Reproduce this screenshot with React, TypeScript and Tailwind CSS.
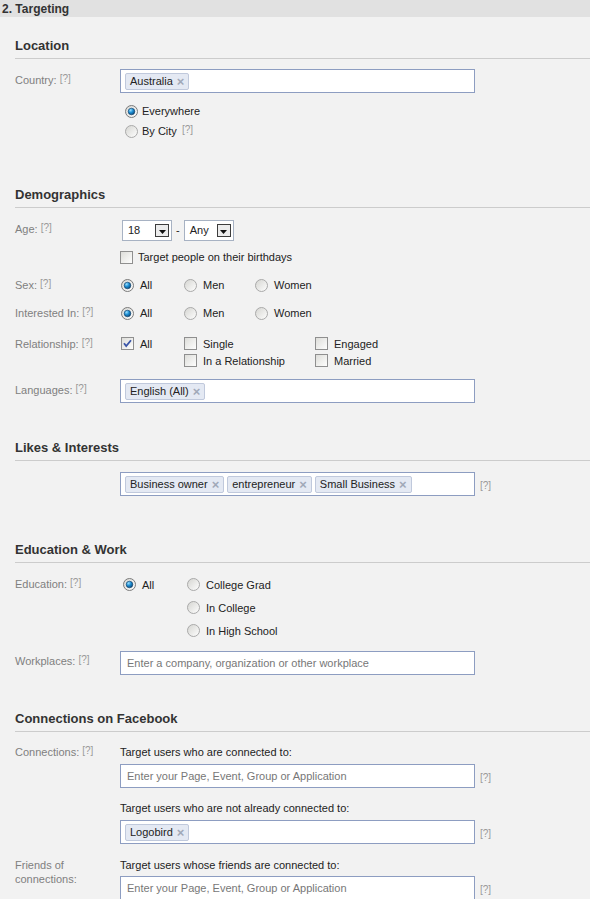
import React from "react";

function Help({ className = "" }: { className?: string }) {
  return <span className={"text-[10px] text-[#999] relative -top-[2px] " + className}>[?]</span>;
}

function Radio({ checked = false }: { checked?: boolean }) {
  return (
    <svg width="13" height="13" viewBox="0 0 13 13" className="shrink-0">
      <defs>
        <linearGradient id="rbg" x1="0" y1="0" x2="1" y2="1">
          <stop offset="0" stopColor="#d4d4d0" />
          <stop offset="1" stopColor="#ffffff" />
        </linearGradient>
        <radialGradient id="rdot" cx="0.35" cy="0.3" r="0.8">
          <stop offset="0" stopColor="#9be0ff" />
          <stop offset="0.45" stopColor="#1f8fd4" />
          <stop offset="1" stopColor="#0a3f6b" />
        </radialGradient>
      </defs>
      <circle cx="6.5" cy="6.5" r="6" fill="url(#rbg)" stroke={checked ? "#7a7a7a" : "#a9a9a9"} />
      {checked && <circle cx="6.5" cy="6.5" r="3.3" fill="url(#rdot)" stroke="#0d3d66" strokeWidth="0.6" />}
    </svg>
  );
}

function Check({ checked = false }: { checked?: boolean }) {
  return (
    <svg width="13" height="13" viewBox="0 0 13 13" className="shrink-0">
      <defs>
        <linearGradient id="cbg" x1="0" y1="0" x2="1" y2="1">
          <stop offset="0" stopColor="#dcdcd8" />
          <stop offset="1" stopColor="#ffffff" />
        </linearGradient>
      </defs>
      <rect x="0.5" y="0.5" width="12" height="12" fill="url(#cbg)" stroke="#8f8f8f" />
      {checked && <path d="M3 6.2 L5.2 9 L10 3.2" fill="none" stroke="#3a55a8" strokeWidth="1.8" />}
    </svg>
  );
}

function Token({ text }: { text: string }) {
  return (
    <span className="inline-flex items-center h-[17px] pl-[4px] pr-[4px] mr-[3px] bg-[#e4e9f3] border border-[#c0c9dc] rounded-[2px] text-[11px] text-[#222] leading-none">
      {text}
      <span className="ml-[4px] text-[#a0a8b8] text-[13px] font-bold leading-none">×</span>
    </span>
  );
}

function TokenInput({ tokens = [], placeholder }: { tokens?: string[]; placeholder?: string }) {
  return (
    <div className="w-[355px] h-[24px] bg-white border border-[#8d9dc1] flex items-center pl-[4px]">
      {tokens.map((t) => (
        <Token key={t} text={t} />
      ))}
      {placeholder && <span className="pl-[2px] text-[11px] text-[#777]">{placeholder}</span>}
    </div>
  );
}

function Label({ children, className = "" }: { children: React.ReactNode; className?: string }) {
  return <div className={"w-[105px] shrink-0 text-[11px] text-[#808080] leading-[14px] " + className}>{children}</div>;
}

function SectionHeader({ title, className = "" }: { title: string; className?: string }) {
  return (
    <div className={"h-[21px] pb-[4px] border-b border-[#cccccc] " + className}>
      <div className="text-[13px] font-bold text-[#333] leading-[16px]">{title}</div>
    </div>
  );
}

function Select({ value, w }: { value: string; w: string }) {
  return (
    <div className={"h-[21px] bg-white border border-[#a7b2c3] flex items-center justify-between pl-[5px] pr-[2px] " + w}>
      <span className="text-[11px] text-[#222]">{value}</span>
      <div className="w-[14px] h-[13px] border border-[#3c3c3c] bg-[#ececec] flex items-end justify-center pb-[2px]">
        <svg width="7" height="4" viewBox="0 0 7 4">
          <path d="M0 0 H7 L3.5 4 Z" fill="#111" />
        </svg>
      </div>
    </div>
  );
}

function Opt({ children, kind, checked = false, gap = "gap-[6px]", className = "" }: { children: React.ReactNode; kind: "r" | "c"; checked?: boolean; gap?: string; className?: string }) {
  return (
    <div className={"flex items-center " + gap + " " + className}>
      {kind === "r" ? <Radio checked={checked} /> : <Check checked={checked} />}
      <span className="text-[11px] text-[#222] leading-[14px]">{children}</span>
    </div>
  );
}

export default function App() {
  return (
    <div className="w-[590px] h-[899px] overflow-hidden bg-[#f2f2f2] font-['Liberation_Sans',Arial,sans-serif]">
      <div className="h-[17px] bg-[#e1e1e1] pl-[2px] flex items-center">
        <span className="text-[12px] font-bold text-[#333]">2. Targeting</span>
      </div>

      <div className="pl-[15px]">
        {/* Location */}
        <SectionHeader title="Location" className="mt-[21px]" />
        <div className="flex mt-[10px]">
          <Label className="pt-[4px]">
            Country: <Help />
          </Label>
          <TokenInput tokens={["Australia"]} />
        </div>
        <div className="pl-[110px] mt-[8px]">
          <Opt kind="r" checked gap="gap-[4px]" className="h-[20px]">Everywhere</Opt>
          <Opt kind="r" gap="gap-[4px]" className="h-[20px]">
            By City <Help className="ml-[2px]" />
          </Opt>
        </div>

        {/* Demographics */}
        <SectionHeader title="Demographics" className="mt-[46px]" />
        <div className="flex mt-[12px]">
          <Label className="pt-[2px]">
            Age: <Help />
          </Label>
          <div className="flex items-center ml-[2px]">
            <Select value="18" w="w-[50px]" />
            <span className="mx-[4px] text-[11px] text-[#222]">-</span>
            <Select value="Any" w="w-[50px]" />
          </div>
        </div>
        <div className="pl-[105px] mt-[6px]">
          <Opt kind="c" gap="gap-[5px]" className="h-[20px]">Target people on their birthdays</Opt>
        </div>

        <div className="flex items-center h-[20px] mt-[8px]">
          <Label>
            Sex: <Help />
          </Label>
          <div className="flex items-center pl-[1px]">
            <Opt kind="r" checked className="w-[63px]">All</Opt>
            <Opt kind="r" className="w-[71px]">Men</Opt>
            <Opt kind="r">Women</Opt>
          </div>
        </div>

        <div className="flex items-center h-[20px] mt-[8px]">
          <Label>
            Interested In: <Help />
          </Label>
          <div className="flex items-center pl-[1px]">
            <Opt kind="r" checked className="w-[63px]">All</Opt>
            <Opt kind="r" className="w-[71px]">Men</Opt>
            <Opt kind="r">Women</Opt>
          </div>
        </div>

        <div className="flex mt-[12px]">
          <Label className="pt-[2px]">
            Relationship: <Help />
          </Label>
          <div className="flex pl-[1px]">
            <div className="w-[63px]">
              <Opt kind="c" checked className="h-[17px]">All</Opt>
            </div>
            <div className="w-[131px]">
              <Opt kind="c" className="h-[17px]">Single</Opt>
              <Opt kind="c" className="h-[17px]">In a Relationship</Opt>
            </div>
            <div>
              <Opt kind="c" className="h-[17px]">Engaged</Opt>
              <Opt kind="c" className="h-[17px]">Married</Opt>
            </div>
          </div>
        </div>

        <div className="flex mt-[10px]">
          <Label className="pt-[4px]">
            Languages: <Help />
          </Label>
          <TokenInput tokens={["English (All)"]} />
        </div>

        {/* Likes */}
        <SectionHeader title="Likes & Interests" className="mt-[37px]" />
        <div className="flex items-center mt-[11px] pl-[105px]">
          <TokenInput tokens={["Business owner", "entrepreneur", "Small Business"]} />
          <Help className="ml-[5px] top-[1px]" />
        </div>

        {/* Education */}
        <SectionHeader title="Education & Work" className="mt-[46px]" />
        <div className="flex mt-[10px]">
          <Label className="pt-[4px]">
            Education: <Help />
          </Label>
          <div className="flex pl-[3px]">
            <div className="w-[64px]">
              <Opt kind="r" checked className="h-[23px]">All</Opt>
            </div>
            <div>
              <Opt kind="r" className="h-[23px]">College Grad</Opt>
              <Opt kind="r" className="h-[23px]">In College</Opt>
              <Opt kind="r" className="h-[23px]">In High School</Opt>
            </div>
          </div>
        </div>

        <div className="flex mt-[9px]">
          <Label className="pt-[3px]">
            Workplaces: <Help />
          </Label>
          <TokenInput placeholder="Enter a company, organization or other workplace" />
        </div>

        {/* Connections */}
        <SectionHeader title="Connections on Facebook" className="mt-[36px]" />
        <div className="flex mt-[13px]">
          <Label>
            Connections: <Help />
          </Label>
          <div>
            <div className="text-[11px] text-[#222] leading-[14px]">Target users who are connected to:</div>
            <div className="flex items-center mt-[5px]">
              <TokenInput placeholder="Enter your Page, Event, Group or Application" />
              <Help className="ml-[5px] top-[1px]" />
            </div>
            <div className="text-[11px] text-[#222] leading-[14px] mt-[13px]">Target users who are not already connected to:</div>
            <div className="flex items-center mt-[5px]">
              <TokenInput tokens={["Logobird"]} />
              <Help className="ml-[5px] top-[1px]" />
            </div>
          </div>
        </div>
        <div className="flex mt-[14px]">
          <Label>
            Friends of
            <br />
            connections:
          </Label>
          <div>
            <div className="text-[11px] text-[#222] leading-[14px]">Target users whose friends are connected to:</div>
            <div className="flex items-center mt-[4px]">
              <TokenInput placeholder="Enter your Page, Event, Group or Application" />
              <Help className="ml-[5px] top-[1px]" />
            </div>
          </div>
        </div>
      </div>
    </div>
  );
}
